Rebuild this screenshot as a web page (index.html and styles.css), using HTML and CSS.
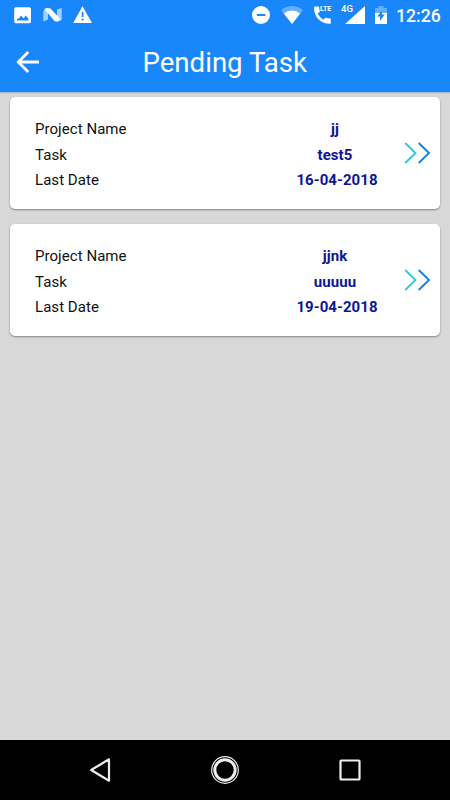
FILE: index.html
```html
<!DOCTYPE html>
<html lang="en">
<head>
<meta charset="utf-8">
<title>Pending Task</title>
<link rel="stylesheet" href="styles.css">
</head>
<body>
<div class="screen">
  <header class="top">
    <div class="status">
      <svg class="ic-image" width="18" height="18" viewBox="0 0 18 18"><path fill="#fff" fill-rule="evenodd" d="M2 .3h13.200Q17 .3 17 2v12.500Q17 16.200 15.200 16.200H2Q.2 16.200.2 14.500V2Q.2.3 2 .3zM2.800 13.400h11.600V11.500L11.500 8.600 9.800 11.500 7 8.600 4.800 11.500 2.800 12z"/></svg>
      <svg class="ic-n" width="20" height="16" viewBox="0 0 20 16"><path fill="#9fd0ff" d="M.3 3.500 5 1.500v11L.3 14.500zM14 2.500 18.700 1v12L14 14z"/><path fill="#fff" d="M1.300 2Q4 .2 7.500 1.500L17.800 12.500Q15.500 15.800 11.500 14z"/></svg>
      <svg class="ic-warn" width="20" height="18" viewBox="0 0 20 18"><path fill="#fff" d="M9.500.2 19 17H.2z"/><path fill="#1787fb" d="M8.700 6h1.800v5H8.700zM8.700 12.500h1.800v2H8.700z"/></svg>
      <svg class="ic-dnd" width="18" height="18" viewBox="0 0 18 18"><circle cx="9" cy="9" r="9" fill="#fff"/><path fill="#1787fb" d="M4.800 8h8.600v2H4.800z"/></svg>
      <svg class="ic-wifi" width="22" height="18" viewBox="0 0 22 18"><path fill="#65b0fd" d="M0 4Q11-3.800 22 4L11 18z"/><path fill="#fff" d="M2.800 7.600Q11 1.600 19.200 7.600L11 18z"/></svg>
      <span class="volte"><svg width="19" height="18" viewBox="0 0 19 18"><path fill="#fff" d="M1.800.5h3.400q.8 0 .9.800.1 1.900.7 3.600.2.600-.3 1.100L4.700 7.800q2.200 4 5.700 5.900l1.700-1.800q.4-.4 1-.2 1.700.5 3.800.6.900.1.900.9v3.700q0 .9-.9.900Q9.500 17.600 5.200 13 1 8.500 1 1.400 1 .5 1.800.5z"/></svg><b>LTE</b></span>
      <span class="signal"><svg width="20" height="18" viewBox="0 0 20 18"><path fill="#fff" d="M20 0v18H0z"/></svg><b>4G</b></span>
      <svg class="ic-batt" width="12" height="18" viewBox="0 0 12 18"><path fill="#65b0fd" d="M0 2h3.500V0h5v2H12v5H0z"/><path fill="#fff" d="M0 7h12v11H0z"/><path fill="#1787fb" d="M7 4.500v4h2.700L5 15v-4.500H2.200z"/></svg>
      <span class="time">12:26</span>
    </div>
    <div class="bar">
      <svg class="back" width="24" height="24" viewBox="0 0 24 24"><path fill="none" stroke="#fff" stroke-width="2.800" d="M12.200 2 2.300 12l9.900 10M2 12h21"/></svg>
      <h1>Pending Task</h1>
    </div>
  </header>
  <main>
    <section class="card">
      <dl>
        <dt>Project Name</dt><dd>jj</dd>
        <dt>Task</dt><dd>test5</dd>
        <dt>Last Date</dt><dd class="date">16-04-2018</dd>
      </dl>
      <svg class="more" width="27" height="24" viewBox="0 0 27 24"><g fill="none" stroke-width="1.900"><path stroke="#30c8dc" d="M1.200 2 11.500 12 1.200 22"/><path stroke="#1580e0" d="M14.700 2 25 12 14.700 22"/></g></svg>
    </section>
    <section class="card">
      <dl>
        <dt>Project Name</dt><dd>jjnk</dd>
        <dt>Task</dt><dd>uuuuu</dd>
        <dt>Last Date</dt><dd class="date">19-04-2018</dd>
      </dl>
      <svg class="more" width="27" height="24" viewBox="0 0 27 24"><g fill="none" stroke-width="1.900"><path stroke="#30c8dc" d="M1.200 2 11.500 12 1.200 22"/><path stroke="#1580e0" d="M14.700 2 25 12 14.700 22"/></g></svg>
    </section>
  </main>
  <nav>
    <svg width="30" height="30" viewBox="0 0 30 30"><path fill="none" stroke="#eee" stroke-width="2.200" stroke-linejoin="round" d="M24 4.300v21.400L6.200 15z"/></svg>
    <svg width="30" height="30" viewBox="0 0 30 30"><g fill="none" stroke="#eee"><circle cx="15" cy="15" r="13.300" stroke-width="1.200"/><circle cx="15" cy="15" r="10.200" stroke-width="3"/></g></svg>
    <svg width="30" height="30" viewBox="0 0 30 30"><rect x="5.500" y="5.500" width="19" height="19" rx=".8" fill="none" stroke="#eee" stroke-width="2.200"/></svg>
  </nav>
</div>
</body>
</html>
```
FILE: styles.css
```css
* { box-sizing: border-box; }
body { margin: 0; font-family: Roboto, sans-serif; }
svg { display: block; flex: none; }
.screen { width: 450px; height: 800px; display: flex; flex-direction: column; background: #d8d8d8; }
.top { height: 92px; background: #1787fb; color: #fff; box-shadow: 0 1px 1px #a8b4c4; }
.status { height: 31px; display: flex; align-items: flex-start; padding: 6px 0 0 14px; }
.ic-image { margin-top: 1px; }
.ic-n { margin: 1px 0 0 11px; }
.ic-warn { margin-left: 10px; }
.ic-dnd { margin-left: 159px; }
.ic-wifi { margin-left: 11px; }
.volte { position: relative; margin-left: 10px; }
.volte b { position: absolute; left: 7px; top: -1px; font-size: 7px; line-height: 8px; }
.signal { position: relative; margin-left: 13px; }
.signal b { position: absolute; left: -4px; top: -3px; font-size: 9.5px; line-height: 12px; font-weight: 500; }
.ic-batt { margin-left: 10px; }
.time { margin-left: 9px; font-size: 17.6px; line-height: 20px; font-weight: 500; }
.bar { height: 61px; display: flex; align-items: center; padding-left: 16px; }
.back { margin-right: 102.5px; }
h1 { margin: 0; padding-top: 2px; font-size: 27.6px; font-weight: 400; line-height: 34px; white-space: nowrap; }
main { flex: 1; padding: 5px 10px 0; }
.card { height: 112px; margin-bottom: 15px; padding: 18px 9px 0 25px; display: flex; background: #fff; border-radius: 5px; box-shadow: 0 1px 2px rgba(0, 0, 0, .4); }
dl { flex: 1; margin: 0; display: grid; grid-template-columns: 231px 138px; grid-auto-rows: 25.6px; align-content: start; line-height: 29px; font-size: 15px; letter-spacing: .05px; color: #111; }
dd { margin: 0; text-align: center; font-weight: 700; color: #0d1596; }
.date { padding-left: 4px; }
.more { margin-top: 26px; }
nav { height: 60px; background: #000; display: flex; justify-content: center; align-items: center; gap: 95px; }
```
